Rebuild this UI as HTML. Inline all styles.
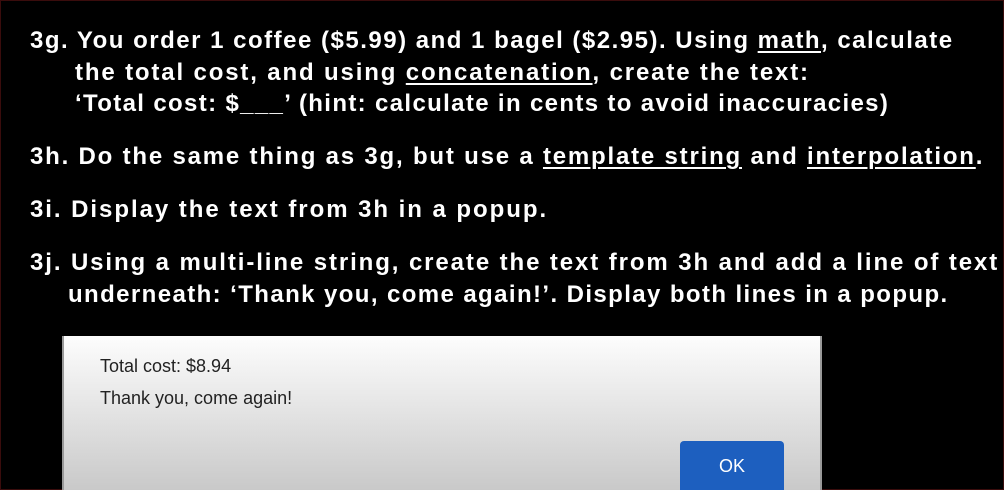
<!DOCTYPE html>
<html><head><meta charset="utf-8"><style>
html,body{margin:0;width:1004px;height:490px;overflow:hidden}
body{background:#000;position:relative;font-family:"Liberation Sans",sans-serif}
.frame{position:absolute;inset:0;border:1px solid #3a0c0c;box-sizing:border-box}
.l{position:absolute;color:#fff;font-weight:bold;font-size:24px;letter-spacing:1.5px;white-space:nowrap;line-height:30px}
u{text-decoration:underline;text-underline-offset:3px;text-decoration-thickness:2px}
.pop{position:absolute;left:62px;top:336px;width:756px;height:154px;background:linear-gradient(#fdfdfd,#c9c9c9);border-left:2px solid #999;border-right:2px solid #999}
.t{position:absolute;left:36px;font-size:18px;color:#222;font-family:"Liberation Sans",sans-serif}
.ok{position:absolute;left:616px;top:105px;width:104px;height:60px;background:#1d5fbf;border-radius:4px;color:#fff;font-size:18px;text-align:center;line-height:50px}
</style></head><body>
<div class="frame"></div>
<div class="l" style="left:30px;top:26px">3g. You order 1 coffee ($5.99) and 1 bagel ($2.95). Using <u>math</u>, calculate</div>
<div class="l" style="left:75px;top:58px;letter-spacing:1.85px">the total cost, and using <u>concatenation</u>, create the text:</div>
<div class="l" style="left:75px;top:89px;letter-spacing:1.35px">‘Total cost: $___’ (hint: calculate in cents to avoid inaccuracies)</div>
<div class="l" style="left:30px;top:142px;letter-spacing:1.8px">3h. Do the same thing as 3g, but use a <u>template string</u> and <u>interpolation</u>.</div>
<div class="l" style="left:30px;top:195px;letter-spacing:1.95px">3i. Display the text from 3h in a popup.</div>
<div class="l" style="left:30px;top:248px;letter-spacing:1.9px">3j. Using a multi-line string, create the text from 3h and add a line of text</div>
<div class="l" style="left:68px;top:280px;letter-spacing:1.4px">underneath: ‘Thank you, come again!’. Display both lines in a popup.</div>
<div class="pop">
<div class="t" style="top:20px">Total cost: $8.94</div>
<div class="t" style="top:52px">Thank you, come again!</div>
<div class="ok">OK</div>
</div>
</body></html>
